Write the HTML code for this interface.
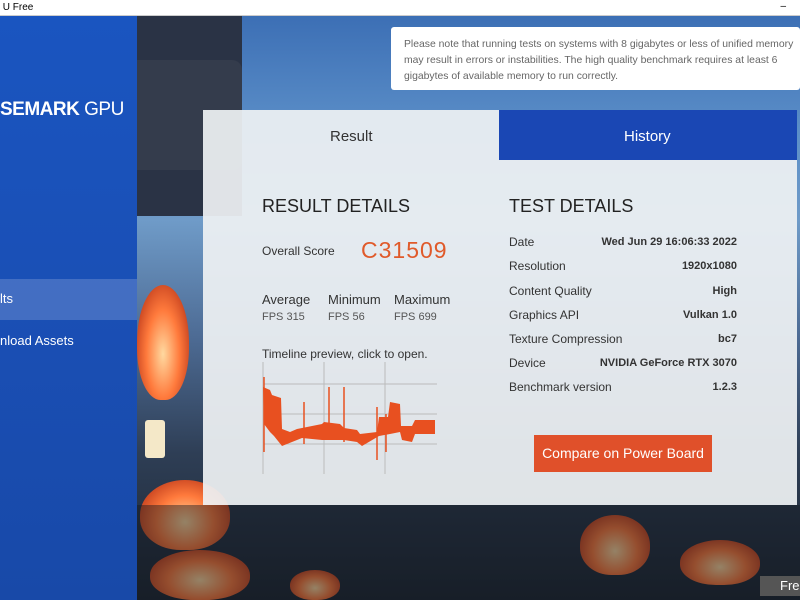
<!DOCTYPE html>
<html><head><meta charset="utf-8"><style>
*{margin:0;padding:0;box-sizing:border-box}
body{width:800px;height:600px;overflow:hidden;position:relative;font-family:"Liberation Sans","DejaVu Sans",sans-serif;background:#2a3f66}
.abs{position:absolute}
#bg{left:0;top:16px;width:800px;height:584px;background:linear-gradient(180deg,#3c6fb5 0%,#5c8fc8 20%,#6f9bc8 35%,#4d6b94 55%,#2e3e55 75%,#1b2430 100%)}
.crys{position:absolute;background:radial-gradient(ellipse at 50% 60%,#ffd9a0 0%,#ff7a3c 45%,#c4401e 80%,transparent 100%);border-radius:50% 50% 45% 45%}
#title{left:0;top:0;width:800px;height:16px;background:#fff;border-bottom:1px solid #ccc;font-size:10px;color:#000;line-height:16px}
#side{left:0;top:16px;width:137px;height:584px;background:linear-gradient(180deg,#1a55c0 0%,#1a4fb5 50%,#1849a8 100%)}
#notice{left:391px;top:27px;width:409px;height:63px;background:#fff;border-radius:3px;font-size:10.4px;color:#666;padding:10px 0 0 13px;line-height:16px;white-space:nowrap;overflow:hidden}
#panel{left:203px;top:110px;width:594px;height:395px;background:rgba(238,241,243,0.93)}
.t{position:absolute;color:#333;white-space:nowrap}
.lab{font-size:12px;color:#333;line-height:14px}
.val{font-size:11px;font-weight:bold;color:#333;text-align:right;right:60px;line-height:14px}
</style></head><body>
<div id="bg" class="abs"></div>
<div class="abs" style="left:137px;top:16px;width:105px;height:200px;background:#2a3345"></div>
<div class="abs" style="left:137px;top:60px;width:105px;height:110px;background:#343c4c;border-radius:0 10px 10px 0"></div>
<div class="crys" style="left:137px;top:285px;width:52px;height:115px"></div>
<div class="crys" style="left:140px;top:480px;width:90px;height:70px"></div>
<div class="crys" style="left:150px;top:550px;width:100px;height:50px"></div>
<div class="crys" style="left:290px;top:570px;width:50px;height:30px"></div>
<div class="crys" style="left:580px;top:515px;width:70px;height:60px"></div>
<div class="crys" style="left:680px;top:540px;width:80px;height:45px"></div>
<div class="abs" style="left:137px;top:505px;width:663px;height:95px;background:rgba(20,25,30,0.45)"></div>
<div class="abs" style="left:145px;top:420px;width:20px;height:38px;background:#f4e8c8;border-radius:3px"></div>
<div id="title" class="abs">&nbsp;U Free<span style="position:absolute;right:14px;top:-1px">–</span></div>
<div id="side" class="abs">
<div class="abs" style="left:0;top:83px;font-size:19px;color:#fff;font-weight:bold;letter-spacing:-0.5px">SEMARK <span style="font-weight:normal">GPU</span></div>
<div class="abs" style="left:0;top:263px;width:137px;height:41px;background:rgba(255,255,255,0.18)"></div>
<div class="abs" style="left:0;top:275px;font-size:13px;color:#fff">lts</div>
<div class="abs" style="left:0;top:317px;font-size:13px;color:#fff">nload Assets</div>
</div>
<div id="notice" class="abs">Please note that running tests on systems with 8 gigabytes or less of unified memory<br>may result in errors or instabilities. The high quality benchmark requires at least 6<br>gigabytes of available memory to run correctly.</div>
<div id="panel" class="abs">
<div class="t" style="left:127px;top:18px;font-size:15px">Result</div>
<div class="abs" style="left:296px;top:0;width:298px;height:50px;background:#1a47b4"></div>
<div class="t" style="left:421px;top:18px;font-size:15px;color:#fff">History</div>
<div class="t" style="left:59px;top:86px;font-size:18px;color:#222">RESULT DETAILS</div>
<div class="t" style="left:306px;top:86px;font-size:18px;color:#222">TEST DETAILS</div>
<div class="t lab" style="left:59px;top:134px">Overall Score</div>
<div class="t" style="left:158px;top:127px;font-size:23px;color:#e05a2a;letter-spacing:1px">C31509</div>
<div class="t" style="left:59px;top:182px;font-size:13px">Average</div>
<div class="t" style="left:125px;top:182px;font-size:13px">Minimum</div>
<div class="t" style="left:191px;top:182px;font-size:13px">Maximum</div>
<div class="t" style="left:59px;top:201px;font-size:11px;color:#555">FPS 315</div>
<div class="t" style="left:125px;top:201px;font-size:11px;color:#555">FPS 56</div>
<div class="t" style="left:191px;top:201px;font-size:11px;color:#555">FPS 699</div>
<div class="t lab" style="left:59px;top:237px">Timeline preview, click to open.</div>
<svg class="abs" style="left:59px;top:252px" width="175" height="112">
<g stroke="#bbb" stroke-width="1"><line x1="1" y1="0" x2="1" y2="112"/><line x1="62" y1="0" x2="62" y2="112"/><line x1="123" y1="0" x2="123" y2="112"/><line x1="1" y1="22" x2="175" y2="22"/><line x1="1" y1="52" x2="175" y2="52"/><line x1="1" y1="82" x2="175" y2="82"/></g>
<path fill="#e85020" d="M1,25 L8,28 L10,33 L19,36 L20,67 L28,70 L35,67 L60,62 L62,60 L78,62 L82,66 L95,68 L98,72 L115,70 L117,55 L126,55 L128,40 L138,42 L139,64 L150,64 L153,58 L173,58 L173,72 L153,72 L150,80 L140,78 L138,70 L128,72 L117,74 L100,84 L95,80 L82,78 L60,78 L40,76 L20,84 L12,74 L8,70 L2,62 Z"/>
<g stroke="#e85020" stroke-width="1.5"><line x1="2" y1="15" x2="2" y2="90"/><line x1="42" y1="40" x2="42" y2="82"/><line x1="67" y1="25" x2="67" y2="78"/><line x1="82" y1="25" x2="82" y2="80"/><line x1="115" y1="45" x2="115" y2="98"/><line x1="124" y1="52" x2="124" y2="90"/></g>
</svg>
<div class="t lab" style="left:306px;top:125px">Date</div><div class="t val" style="top:125px">Wed Jun 29 16:06:33 2022</div>
<div class="t lab" style="left:306px;top:149px">Resolution</div><div class="t val" style="top:149px">1920x1080</div>
<div class="t lab" style="left:306px;top:174px">Content Quality</div><div class="t val" style="top:174px">High</div>
<div class="t lab" style="left:306px;top:198px">Graphics API</div><div class="t val" style="top:198px">Vulkan 1.0</div>
<div class="t lab" style="left:306px;top:222px">Texture Compression</div><div class="t val" style="top:222px">bc7</div>
<div class="t lab" style="left:306px;top:246px">Device</div><div class="t val" style="top:246px">NVIDIA GeForce RTX 3070</div>
<div class="t lab" style="left:306px;top:270px">Benchmark version</div><div class="t val" style="top:270px">1.2.3</div>
<div class="abs" style="left:331px;top:325px;width:178px;height:37px;background:#e0502a;color:#fff;font-size:14px;text-align:center;line-height:37px">Compare on Power Board</div>
</div>
<div class="abs" style="left:760px;top:576px;width:40px;height:20px;background:#555;color:#fff;font-size:13px;padding:2px 0 0 20px">Free</div>
</body></html>
